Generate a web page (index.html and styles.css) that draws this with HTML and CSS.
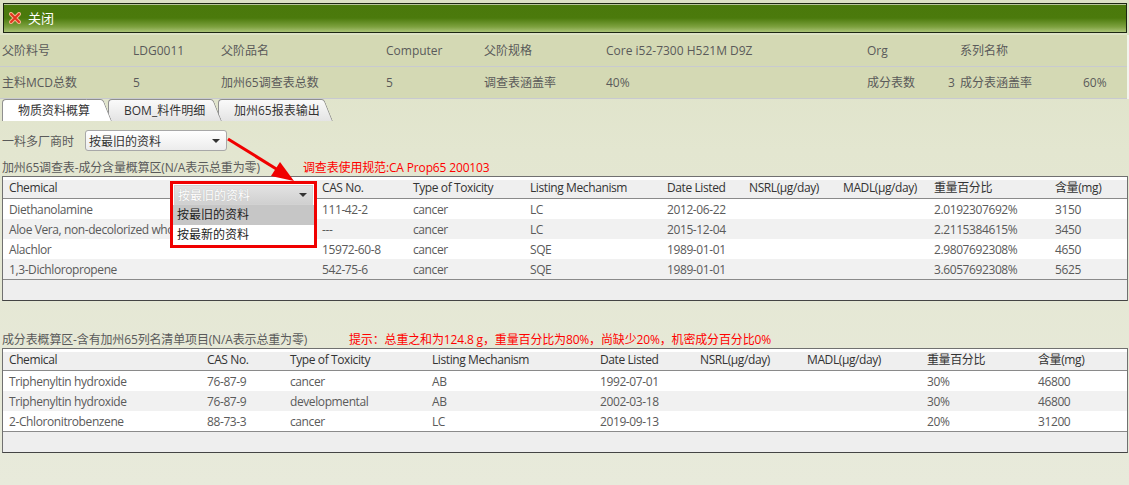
FILE: index.html
```html
<!DOCTYPE html>
<html lang="zh">
<head>
<meta charset="utf-8">
<title>物质资料概算</title>
<link rel="stylesheet" href="styles.css">
</head>
<body>
<div class="titlebar">
  <svg class="close-icon" width="12" height="12" viewBox="0 0 12 12"><path d="M2 2L10 10M10 2L2 10" stroke="#f4b48c" stroke-width="4" stroke-linecap="round"/><path d="M2 2L10 10M10 2L2 10" stroke="#e2341e" stroke-width="2" stroke-linecap="round"/></svg>
  <span class="close-text">关闭</span>
</div>

<div class="info">
  <div class="info-row">
    <span>父阶料号</span><span>LDG0011</span><span>父阶品名</span><span>Computer</span><span>父阶规格</span><span>Core i52-7300 H521M D9Z</span><span>Org</span><span></span><span>系列名称</span><span></span>
  </div>
  <div class="info-row">
    <span>主料MCD总数</span><span>5</span><span>加州65调查表总数</span><span>5</span><span>调查表涵盖率</span><span>40%</span><span>成分表数</span><span>3</span><span>成分表涵盖率</span><span>60%</span>
  </div>
</div>

<div class="tabs">
  <div class="tab tab1 active">物质资料概算</div>
  <div class="tab tab2">BOM_料件明细</div>
  <div class="tab tab3">加州65报表输出</div>
</div>

<div class="filter">
  <span class="filter-label">一料多厂商时</span>
  <div class="select"><span>按最旧的资料</span><span class="caret"></span></div>
</div>

<div class="section-title s1">
  <span class="st-text">加州65调查表-成分含量概算区(N/A表示总重为零)</span>
  <span class="note">调查表使用规范:CA Prop65 200103</span>
</div>

<div class="dtable t1">
  <div class="tr thead"><span>Chemical</span><span>CAS No.</span><span>Type of Toxicity</span><span>Listing Mechanism</span><span>Date Listed</span><span>NSRL(μg/day)</span><span>MADL(μg/day)</span><span>重量百分比</span><span>含量(mg)</span></div>
  <div class="tbody">
    <div class="tr trow"><span>Diethanolamine</span><span>111-42-2</span><span>cancer</span><span>LC</span><span>2012-06-22</span><span></span><span></span><span>2.0192307692%</span><span>3150</span></div>
    <div class="tr trow"><span class="cut">Aloe Vera, non-decolorized whole leaf extract</span><span>---</span><span>cancer</span><span>LC</span><span>2015-12-04</span><span></span><span></span><span>2.2115384615%</span><span>3450</span></div>
    <div class="tr trow"><span>Alachlor</span><span>15972-60-8</span><span>cancer</span><span>SQE</span><span>1989-01-01</span><span></span><span></span><span>2.9807692308%</span><span>4650</span></div>
    <div class="tr trow"><span>1,3-Dichloropropene</span><span>542-75-6</span><span>cancer</span><span>SQE</span><span>1989-01-01</span><span></span><span></span><span>3.6057692308%</span><span>5625</span></div>
  </div>
  <div class="tfoot"></div>
</div>

<div class="section-title s2">
  <span class="st-text">成分表概算区-含有加州65列名清单项目(N/A表示总重为零)</span>
  <span class="note">提示：总重之和为124.8 g，重量百分比为80%，尚缺少20%，机密成分百分比0%</span>
</div>

<div class="dtable t2">
  <div class="tr thead"><span>Chemical</span><span>CAS No.</span><span>Type of Toxicity</span><span>Listing Mechanism</span><span>Date Listed</span><span>NSRL(μg/day)</span><span>MADL(μg/day)</span><span>重量百分比</span><span>含量(mg)</span></div>
  <div class="tbody">
    <div class="tr trow"><span>Triphenyltin hydroxide</span><span>76-87-9</span><span>cancer</span><span>AB</span><span>1992-07-01</span><span></span><span></span><span>30%</span><span>46800</span></div>
    <div class="tr trow"><span>Triphenyltin hydroxide</span><span>76-87-9</span><span>developmental</span><span>AB</span><span>2002-03-18</span><span></span><span></span><span>30%</span><span>46800</span></div>
    <div class="tr trow"><span>2-Chloronitrobenzene</span><span>88-73-3</span><span>cancer</span><span>LC</span><span>2019-09-13</span><span></span><span></span><span>20%</span><span>31200</span></div>
  </div>
  <div class="tfoot"></div>
</div>

<div class="dropdown">
  <div class="dd-head"><span>按最旧的资料</span><span class="caret"></span></div>
  <div class="dd-opt selected">按最旧的资料</div>
  <div class="dd-opt">按最新的资料</div>
</div>

<svg class="arrow" width="1129" height="485" viewBox="0 0 1129 485">
  <line x1="228" y1="139" x2="278" y2="170" stroke="#f00000" stroke-width="3"/>
  <polygon points="294,181 271,176 280,162" fill="#f00000"/>
</svg>
</body>
</html>
```

FILE: styles.css
```css
html, body {
  margin: 0;
  padding: 0;
}

body {
  width: 1129px;
  height: 485px;
  overflow: hidden;
  position: relative;
  font-family: "Open Sans", "Noto Sans CJK SC", sans-serif;
  font-size: 12px;
  color: #5a5a5a;
  background: linear-gradient(#dce1c4 0px, #e3e6d0 150px, #e8eadb 485px);
}

/* title bar */
.titlebar {
  margin: 3px 2px 0 3px;
  height: 28px;
  border: 1px solid #1c2612;
  box-shadow: inset 0 1px 0 #b9c79a;
  background: linear-gradient(#4a790b 0%, #4b7a0c 50%, #7ea240 82%, #abc378 100%);
  display: flex;
  align-items: center;
  padding-left: 5px;
  color: #ffffff;
}

.close-icon {
  display: block;
}

.close-text {
  margin-left: 7px;
  font-size: 13px;
  line-height: 28px;
}

/* info block */
.info {
  margin-top: 2px;
  width: 1127px;
  border-right: 2px solid #f3f4ec;
  background: #d4d9b4;
}

.info-row {
  display: grid;
  grid-template-columns: 131px 88px 165px 98px 122px 261px 81px 12px 123px 1fr;
  padding-left: 2px;
  height: 31px;
  line-height: 31px;
  border-bottom: 1px solid #c8cad0;
  white-space: nowrap;
}

/* tabs */
.tabs {
  display: flex;
  height: 22px;
  padding-left: 2px;
}

.tab {
  position: relative;
  box-sizing: border-box;
  height: 22px;
  line-height: 21px;
  padding-left: 15px;
  border: 1px solid #8f8f8f;
  border-right: 0;
  border-bottom: 0;
  border-top-left-radius: 4px;
  background: linear-gradient(#fafafa, #e4e4e4);
  color: #333;
  white-space: nowrap;
}

.tab::after {
  content: "";
  position: absolute;
  z-index: -1;
  top: -1px;
  bottom: 0;
  right: -12px;
  width: 16px;
  background: inherit;
  border-top: 1px solid #8f8f8f;
  border-right: 1px solid #8f8f8f;
  border-top-right-radius: 3px;
  transform: skewX(22deg);
  transform-origin: bottom left;
}

.tab.active {
  background: #ffffff;
}

.tab1 { width: 98px; z-index: 3; }
.tab2 { width: 102px; margin-left: 8px; z-index: 2; }
.tab3 { width: 103px; margin-left: 8px; z-index: 1; }

/* filter */
.filter {
  display: flex;
  align-items: center;
  margin-top: 9px;
  padding-left: 2px;
  height: 21px;
}

.filter-label {
  width: 83px;
}

.select {
  box-sizing: border-box;
  width: 142px;
  height: 21px;
  border: 1px solid #a8a8a8;
  border-radius: 3px;
  background: linear-gradient(#ffffff, #ececec);
  display: flex;
  align-items: center;
  justify-content: space-between;
  padding: 0 6px 0 3px;
  color: #333;
}

.caret {
  width: 0;
  height: 0;
  border-left: 4px solid transparent;
  border-right: 4px solid transparent;
  border-top: 4px solid #333;
}

/* section titles */
.section-title {
  display: flex;
  height: 16px;
  line-height: 16px;
  padding-left: 2px;
  white-space: nowrap;
  letter-spacing: -0.15px;
}

.s1 { margin-top: 9px; }
.s1 .st-text { width: 301px; }

.s2 { margin-top: 31px; }
.s2 .st-text { width: 347px; }

.note {
  color: #ff0000;
}

/* data tables */
.dtable {
  margin-left: 2px;
  width: 1126px;
  box-sizing: border-box;
  border: 1px solid #707070;
  border-bottom-color: #444;
  background: #ffffff;
  letter-spacing: -0.4px;
}

.tr {
  display: grid;
  white-space: nowrap;
}

.tr span {
  padding: 1px 0 0 6px;
  overflow: hidden;
}

.tr span.cut {
  width: 161px;
}

.t1 .tr { grid-template-columns: 313px 91px 117px 137px 82px 94px 91px 121px 1fr; }
.t2 .tr { grid-template-columns: 198px 83px 142px 168px 100px 107px 120px 111px 1fr; }

.thead {
  height: 21px;
  line-height: 20px;
  border-bottom: 1px solid #8a8a8a;
  background: linear-gradient(#ffffff 0px, #ffffff 3px, #efefef 3px);
  color: #333;
}

.trow {
  height: 20px;
  line-height: 20px;
}

.trow span {
  padding-top: 2px;
  line-height: 18px;
}

.trow:nth-child(even) {
  background: #f1f1f1;
}

.tfoot {
  height: 20px;
  border-top: 1px solid #8a8a8a;
  background: #eeeeee;
}

/* open dropdown overlay */
.dropdown {
  position: absolute;
  left: 170px;
  top: 181px;
  width: 147px;
  height: 67px;
  box-sizing: border-box;
  border: 3px solid #f00000;
  background: #ffffff;
  color: #222;
}

.dd-head {
  height: 20px;
  margin: 1px 1px 0 1px;
  box-sizing: border-box;
  border: 1px solid #d2d2d2;
  background: linear-gradient(#e2e2e2, #d0d0d0);
  color: #ffffff;
  text-shadow: 0 0 1px #b0b0b0;
  display: flex;
  align-items: center;
  justify-content: space-between;
  padding: 0 5px 0 3px;
}

.dd-opt {
  height: 20px;
  line-height: 20px;
  padding-left: 4px;
}

.dd-opt.selected {
  background: #c6c6c6;
}

.arrow {
  position: absolute;
  left: 0;
  top: 0;
  pointer-events: none;
}
```
